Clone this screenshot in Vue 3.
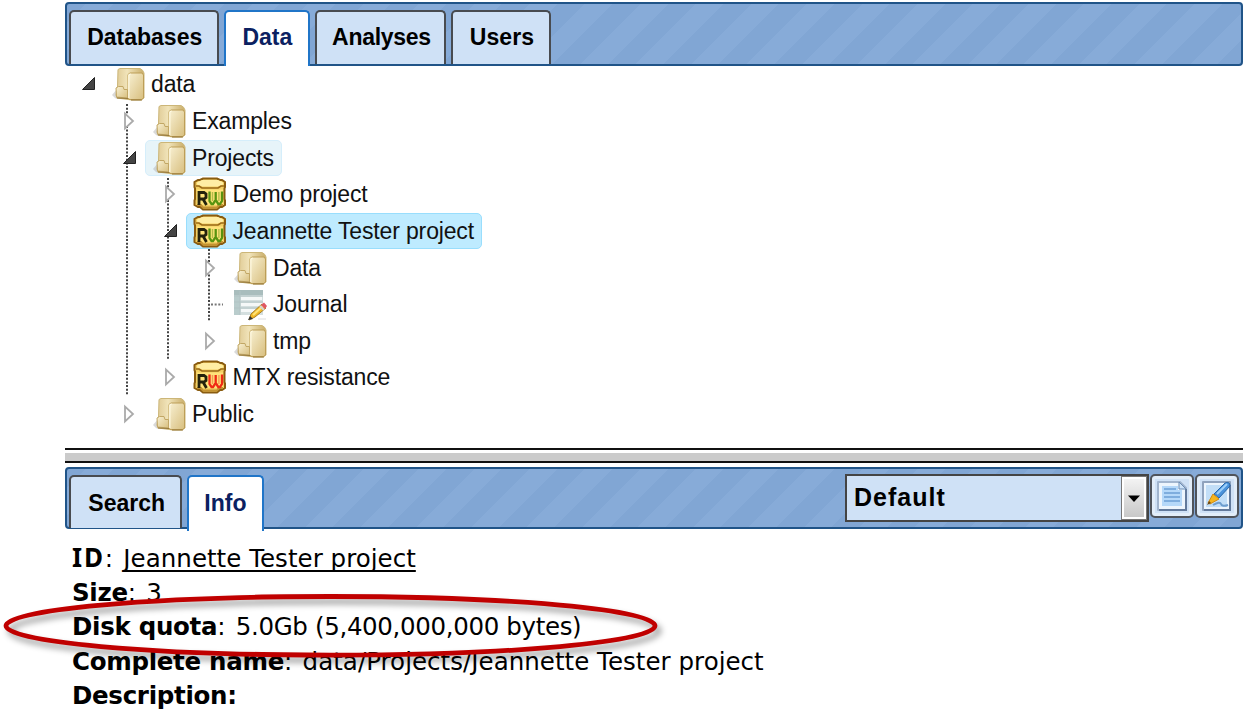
<script setup>
const rows = [
  { label: 'data', level: 0, icon: 'folder', state: 'open' },
  { label: 'Examples', level: 1, icon: 'folder', state: 'closed' },
  { label: 'Projects', level: 1, icon: 'folder', state: 'open', mark: 'hovered' },
  { label: 'Demo project', level: 2, icon: 'rw', state: 'closed' },
  { label: 'Jeannette Tester project', level: 2, icon: 'rw', state: 'open', mark: 'selected' },
  { label: 'Data', level: 3, icon: 'folder', state: 'closed' },
  { label: 'Journal', level: 3, icon: 'journal', state: 'leaf' },
  { label: 'tmp', level: 3, icon: 'folder', state: 'closed' },
  { label: 'MTX resistance', level: 2, icon: 'rw-red', state: 'closed' },
  { label: 'Public', level: 1, icon: 'folder', state: 'closed' },
]
</script>

<template>
  <div class="screen">
    <main class="workspace">
      <nav class="bar top-bar">
        <button class="tab t-databases">Databases</button>
        <button class="tab t-data active">Data</button>
        <button class="tab t-analyses">Analyses</button>
        <button class="tab t-users">Users</button>
      </nav>

      <section class="tree">
        <svg class="guides" width="200" height="380" viewBox="65 66 200 380">
          <g stroke="#444" stroke-width="2" stroke-dasharray="2 1.65" fill="none">
            <path d="M127 104V396M168 178V360M209 249V322" />
            <path d="M211 304.500H223" stroke="#777" />
          </g>
        </svg>
        <div v-for="row in rows" :key="row.label" class="row" :class="'level-' + row.level">
          <span class="toggle">
            <svg v-if="row.state === 'open'" width="14" height="14" viewBox="0 0 14 14">
              <path d="M12.500 .5V12.500H.5Z" fill="#444" stroke="#222" />
            </svg>
            <svg v-else-if="row.state === 'closed'" width="12" height="20" viewBox="0 0 12 20">
              <path d="M2 2.500V17.500L10 10Z" fill="#fff" stroke="#aaa" stroke-width="1.800" />
            </svg>
          </span>
          <span class="node" :class="row.mark">
            <svg v-if="row.icon === 'folder'" class="icon" width="34" height="34" viewBox="0 0 34 34">
              <defs>
                <linearGradient id="paper" x1="0" y1="0" x2="1" y2="1">
                  <stop offset="0" stop-color="#f8f0d2" />
                  <stop offset="1" stop-color="#d8bf7f" />
                </linearGradient>
                <linearGradient id="back" x1="0" y1="0" x2="1" y2="0">
                  <stop offset="0" stop-color="#dfca94" />
                  <stop offset=".4" stop-color="#f1e4ba" />
                  <stop offset="1" stop-color="#c9ad69" />
                </linearGradient>
              </defs>
              <path d="M0 28L5 22V32L3 31Z" fill="#aaa" opacity=".45" />
              <path d="M6 2.500L8 1.500H28Q31 2.500 32 6V31L29 33H20L5 31L4 28L5.500 20Z" fill="url(#back)" stroke="#ccb678" />
              <path d="M16 7.500L18 6H30L31.500 8V31L29.500 32.500H17L16 31Z" fill="url(#paper)" stroke="#bd9e57" />
              <path d="M16.800 31V8L18.500 6.800" fill="none" stroke="#fffae3" stroke-width="1.300" />
              <path d="M4 21L6.500 19.500H11L12 22.500H15.500V31L4.500 30Z" fill="url(#paper)" stroke="#c2a765" />
              <path d="M5 31L16 31.500M19 33H30" stroke="#96783b" />
            </svg>
            <svg v-else-if="row.icon === 'journal'" class="icon" width="34" height="34" viewBox="0 0 34 34">
              <path d="M0 3H29V28H0Z" fill="#d4dfdf" />
              <path d="M0 3H29V8H0Z" fill="#a9bdbd" />
              <path d="M0 8H6V28H0Z" fill="#b9cccc" />
              <path d="M7 10H28V13H7ZM7 16H28V19H7ZM7 22H23V25H7Z" fill="#f5f8f8" />
              <path d="M0 9H29M0 15H29M0 21H29M6 4V28" stroke="#b2c3c4" />
              <path d="M15 33L17 27L28 17L32 21L21 30Z" fill="#f2b928" stroke="#a98028" />
              <path d="M19 28L29 19" stroke="#ffe477" stroke-width="2" />
              <path d="M27 18L30 15.500L33 19L31 22Z" fill="#df5865" />
              <path d="M26 19L30 23" stroke="#d5d5d5" stroke-width="2" />
              <path d="M14 33L16 29L19 32Z" fill="#333" />
              <path d="M24 32H32" stroke="#ddd" />
            </svg>
            <svg v-else class="icon" width="34" height="34" viewBox="0 0 34 34">
              <path d="M10 1.500H24L27 3H29L32 5V10L31.500 11.500V22L32 23.500V28L29 30H27L24 32.500H10L7 30H5L1.500 28V23.500L2 22V11.500L1.500 10V5L5 3H7Z" fill="#f3cf62" stroke="#8a5c10" stroke-width="2" />
              <path d="M9 3H25L30 5.500V7.500L25 9.500H9L4 7.500V5.500Z" fill="#ffeea4" />
              <path d="M3 9H6L9 11H25L28 9H31" fill="none" stroke="#9b6b18" stroke-width="1.600" />
              <path d="M4 12.500H30V28H4Z" fill="#ffe37a" />
              <path d="M4 28H8L10 30.500H24L26 28H30" fill="none" stroke="#c39232" stroke-width="2" />
              <path d="M6 28V15.500H11L13 17V20.500L11 22H6M10 22L13.500 28" fill="none" stroke="#24220c" stroke-width="2.800" />
              <path d="M16.500 14.500V24L18.500 27H20L22.700 23V15V23L25.300 27H27L29 24V14.500" fill="none" :stroke="row.icon === 'rw-red' ? '#f02a16' : '#589310'" stroke-width="2.300" />
              <path d="M19.500 15V24M25.900 15V24" fill="none" :stroke="row.icon === 'rw-red' ? '#f59a55' : '#b3bd48'" stroke-width="1.400" />
            </svg>
            <span class="label">{{ row.label }}</span>
          </span>
        </div>
      </section>

      <div class="splitter"></div>

      <nav class="bar info-bar">
        <button class="tab t-search">Search</button>
        <button class="tab t-info active">Info</button>
        <div class="select">
          <span class="value">Default</span>
          <span class="drop">
            <svg width="12" height="7" viewBox="0 0 12 7"><path d="M0 .5H12L6 7Z" fill="#000" /></svg>
          </span>
        </div>
        <button class="tool" aria-label="View">
          <svg width="32" height="32" viewBox="0 0 32 32">
            <path d="M2 2H24L30 8V30H2Z" fill="#edf5fd" stroke="#a2b5ce" stroke-width="2" stroke-linejoin="round" />
            <path d="M30 9V30H3" fill="none" stroke="#62799b" stroke-width="2" />
            <path d="M6 6H22V10H26V26H6Z" fill="#b5d8f9" />
            <path d="M23 2V9H30Z" fill="#cfe4f9" stroke="#6d8db5" />
            <path d="M8 9H20M8 13H24M8 17H24M8 21H24" stroke="#6c9ed5" stroke-width="1.700" />
          </svg>
        </button>
        <button class="tool" aria-label="Edit">
          <svg width="32" height="32" viewBox="0 0 32 32">
            <path d="M2 2H29V30H2Z" fill="#edf5fd" stroke="#8fa2bd" stroke-width="2" stroke-linejoin="round" />
            <path d="M29 5V30H3" fill="none" stroke="#62799b" stroke-width="2" />
            <path d="M5 5H26V27H5Z" fill="#c2def7" />
            <path d="M12 25Q19 21 20 24T27 25" fill="none" stroke="#6d9dce" stroke-width="2" />
            <path d="M13 14L24 3Q29 1 29 6L18 18Z" fill="#4b93dc" stroke="#2867aa" />
            <path d="M16 14L26 4" stroke="#9ed0fa" stroke-width="2" />
            <path d="M7 23L12 14L18 19L9 24Z" fill="#f6b51d" stroke="#d18b13" />
            <path d="M6 25L8 21L10 23Z" fill="#684719" />
          </svg>
        </button>
      </nav>

      <section class="details">
        <p><b class="k-id">ID</b>: <u>Jeannette Tester project</u></p>
        <p><b>Size</b>: <span>3</span></p>
        <p><b>Disk quota</b>: <span class="quota">5.0Gb (5,400,000,000 bytes)</span></p>
        <p><b>Complete name</b>: <span>data/Projects/Jeannette Tester project</span></p>
        <p><b>Description:</b></p>
      </section>
    </main>

    <svg class="callout" width="680" height="90" viewBox="0 585 680 90">
      <ellipse cx="330.500" cy="625.800" rx="324.500" ry="29.300" fill="none" stroke="#c00000" stroke-width="4.800" />
    </svg>
  </div>
</template>

<style>
body { background: #fff; }
</style>

<style scoped>
.screen { position: relative; width: 1243px; height: 711px; overflow: hidden; background: #fff; }
.workspace { margin-left: 65px; padding-top: 2px; }
.bar {
  box-sizing: border-box;
  display: flex;
  align-items: flex-start;
  height: 64px;
  padding: 6px 2px 0 2px;
  border: 2px solid #205488;
  border-radius: 4px;
  background: repeating-linear-gradient(135deg, #81a6d4 0 13.400px, #87abd8 13.400px 33px, #81a6d4 33px 39.200px);
}
.tab {
  box-sizing: border-box;
  height: 54px;
  margin: 0 5px 0 0;
  padding: 0 0 1px 1px;
  border: 2px solid #484b50;
  border-bottom: 0;
  border-radius: 5px 5px 0 0;
  background: #cfe1f6;
  color: #000;
  font: bold 23px "Liberation Sans", Arial, sans-serif;
  white-space: nowrap;
}
.tab.active { height: 56px; padding: 0 0 3px; border-color: #2075c8; background: #fff; color: #0b2161; }
.t-databases { width: 150.400px; }
.t-data { width: 86px; }
.t-analyses { width: 131px; letter-spacing: -.3px; }
.t-users { width: 100px; letter-spacing: .1px; }
.t-search { width: 113.400px; }
.t-info { width: 77px; }

.tree { position: relative; height: 382px; }
.guides { position: absolute; left: 0; top: 0; }
.row { position: relative; display: flex; align-items: center; height: 36.650px; padding-left: 13px; }
.level-1 { padding-left: 54px; }
.level-2 { padding-left: 94.500px; }
.level-3 { padding-left: 135px; }
.toggle { display: flex; align-items: center; width: 26px; padding-left: 4px; box-sizing: border-box; }
.toggle svg { display: block; }
.node {
  box-sizing: border-box;
  display: flex;
  align-items: center;
  height: 36px;
  padding: 0 7px 0 7px;
  border: 1px solid transparent;
  border-radius: 5px;
}
.hovered { background: #e7f4f9; border-color: #d5eefb; }
.selected { background: #beebff; border-color: #99defd; }
.icon { display: block; margin-right: 5px; }
.level-2 .icon { margin: 0 6px 0 -1px; }
.label { color: #111; font: 23px/34px "Liberation Sans", Arial, sans-serif; letter-spacing: -.15px; white-space: nowrap; }

.splitter {
  box-sizing: border-box;
  height: 15px;
  margin-bottom: 4px;
  border-top: 2px solid #111;
  border-bottom: 2px solid #111;
  background: linear-gradient(#fff 0 3px, #cbcbcb 3px);
}
.info-bar { height: 62px; }
.info-bar .tab { height: 53px; padding: 1px 0 0 2px; }
.info-bar .tab.active { height: 56px; padding: 0 1px 2px 0; }
.select {
  box-sizing: border-box;
  display: flex;
  width: 304px;
  height: 48px;
  margin: -1px 0 0 auto;
  border: 2px solid #444;
  background: #cfe1f6;
}
.value { flex: 1; padding-left: 7px; font: bold 25px/43px "Liberation Sans", Arial, sans-serif; letter-spacing: 1px; }
.drop {
  display: flex;
  align-items: center;
  justify-content: center;
  width: 24px;
  border: 1px solid #777;
  box-shadow: inset 0 0 0 2px #fff;
  background: linear-gradient(#f5f5f5, #c6c6c6);
}
.tool {
  box-sizing: border-box;
  display: flex;
  align-items: center;
  justify-content: center;
  width: 44px;
  height: 44px;
  margin: -1px 0 0 1px;
  padding: 0;
  border: 2px solid #50545b;
  border-radius: 5px;
  background: #cfe1f6;
  box-shadow: inset 0 0 0 3px #e2edf9;
}
.details { padding: 12.500px 0 0 7px; color: #000; font: 24.500px/34.400px "DejaVu Sans", Tahoma, sans-serif; letter-spacing: .03px; }
.details p { height: 34.400px; margin: 0; white-space: nowrap; }
.details b { letter-spacing: -.3px; }
.details .k-id { font-family: "Noto Sans", Tahoma, sans-serif; font-size: 26px; line-height: 30px; letter-spacing: 1.800px; }
.details u, .details span { margin-left: 2.500px; }
.details .quota { letter-spacing: -.350px; }
.details u { text-decoration-thickness: 1.500px; text-underline-offset: 3px; text-decoration-skip-ink: none; }
.callout { position: absolute; left: 0; top: 585px; filter: drop-shadow(4px 5px 3px rgba(0, 0, 0, .4)); }
</style>
